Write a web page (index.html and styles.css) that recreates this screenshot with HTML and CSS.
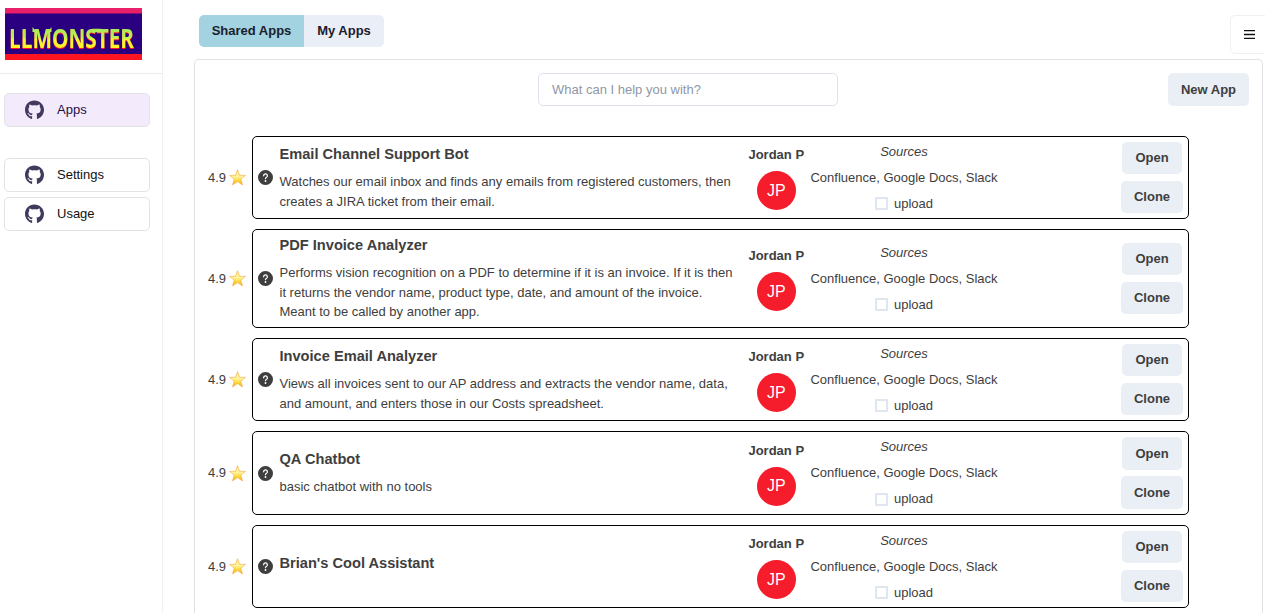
FILE: index.html
```
<!DOCTYPE html>
<html lang="en">
<head>
<meta charset="utf-8">
<title>LLMonster</title>
<link rel="stylesheet" href="styles.css">
</head>
<body>
<svg class="defs" width="0" height="0" aria-hidden="true">
  <defs>
    <linearGradient id="gold" x1="0" y1="0" x2="0" y2="1"><stop offset="0" stop-color="#ffe98a"/><stop offset=".45" stop-color="#fff3a0"/><stop offset=".65" stop-color="#ffe04a"/><stop offset="1" stop-color="#fba81c"/></linearGradient>
    <linearGradient id="slime" gradientUnits="userSpaceOnUse" x1="0" y1="18" x2="0" y2="41"><stop offset="0" stop-color="#a6e85c"/><stop offset=".5" stop-color="#bdf052"/><stop offset=".6" stop-color="#f4f636"/><stop offset="1" stop-color="#fff01e"/></linearGradient>
    <symbol id="github" viewBox="0 0 496 512"><path d="M165.9 397.4c0 2-2.3 3.6-5.2 3.6-3.3.3-5.6-1.3-5.6-3.6 0-2 2.3-3.6 5.2-3.6 3-.3 5.6 1.3 5.6 3.6zm-31.1-4.5c-.7 2 1.3 4.3 4.3 4.9 2.6 1 5.6 0 6.2-2s-1.3-4.3-4.3-5.2c-2.6-.7-5.5.3-6.2 2.3zm44.2-1.7c-2.9.7-4.9 2.6-4.6 4.9.3 2 2.9 3.3 5.9 2.6 2.9-.7 4.9-2.6 4.6-4.6-.3-1.9-3-3.2-5.9-2.9zM244.8 8C106.1 8 0 113.3 0 252c0 110.9 69.8 205.8 169.5 239.2 12.8 2.3 17.3-5.6 17.3-12.1 0-6.2-.3-40.4-.3-61.4 0 0-70 15-84.7-29.8 0 0-11.4-29.1-27.8-36.6 0 0-22.9-15.7 1.6-15.4 0 0 24.9 2 38.6 25.8 21.9 38.6 58.6 27.5 72.9 20.9 2.3-16 8.8-27.1 16-33.7-55.9-6.2-112.3-14.3-112.3-110.5 0-27.5 7.6-41.3 23.6-58.9-2.6-6.5-11.1-33.3 2.6-67.9 20.9-6.5 69 27 69 27 20-5.6 41.5-8.5 62.8-8.5s42.8 2.9 62.8 8.5c0 0 48.1-33.6 69-27 13.7 34.7 5.2 61.4 2.6 67.9 16 17.7 25.8 31.5 25.8 58.9 0 96.5-58.9 104.2-114.8 110.5 9.2 7.9 17 22.9 17 46.4 0 33.7-.3 75.4-.3 83.6 0 6.5 4.6 14.4 17.3 12.1C428.2 457.8 496 362.9 496 252 496 113.3 383.5 8 244.8 8z"/></symbol>
    <symbol id="star" viewBox="0 0 16 16"><path d="M8 .6 9.9 5.9 15.5 6 11.100 9.500 12.700 15 8 11.800 3.300 15 4.900 9.500.500 6 6.100 5.900z" fill="url(#gold)" stroke="#eea93a" stroke-width=".55" stroke-linejoin="round"/></symbol>
    <symbol id="help" viewBox="0 0 24 24"><path fill="currentColor" d="M12 0a12 12 0 1 0 12 12A12.013 12.013 0 0 0 12 0zm0 19a1.500 1.500 0 1 1 1.500-1.500A1.500 1.500 0 0 1 12 19zm1.600-6.080a1 1 0 0 0-.6.917 1 1 0 1 1-2 0 3 3 0 0 1 1.800-2.750A2 2 0 1 0 10 9.255a1 1 0 1 1-2 0 4 4 0 1 1 5.600 3.666z"/></symbol>
  </defs>
</svg>
<div class="app">
  <aside class="sidebar">
    <div class="brand">
      <svg class="logo" viewBox="0 0 137 52" role="img" aria-label="LLMonster">
        <rect width="137" height="52" fill="#2b0080"/>
        <rect width="137" height="5.500" fill="#ea1f6a"/>
        <rect y="46" width="137" height="6" fill="#ff1520"/>
        <text class="logo-text" x="4" y="39.500" textLength="125" lengthAdjust="spacingAndGlyphs">LLMONSTER</text>
        <path d="M27.500 24v-5l4 5zM46.500 24v-5l-4 5zM87 20.700h9v3.600h-9z" fill="url(#slime)"/>
      </svg>
    </div>
    <nav class="nav">
      <a class="nav-item active"><svg class="nav-icon"><use href="#github"/></svg>Apps</a>
      <a class="nav-item nav-split"><svg class="nav-icon"><use href="#github"/></svg>Settings</a>
      <a class="nav-item"><svg class="nav-icon"><use href="#github"/></svg>Usage</a>
    </nav>
  </aside>
  <main class="main">
    <header class="topbar">
      <div class="tabs"><button class="tab selected">Shared Apps</button><button class="tab">My Apps</button></div>
      <button class="menu" aria-label="Menu"><svg width="11" height="9" viewBox="0 0 11 9"><path d="M0 .5h11M0 4.500h11M0 8.500h11" stroke="#111" stroke-width="1.300"/></svg></button>
    </header>
    <section class="panel">
      <div class="toolbar">
        <input class="search" placeholder="What can I help you with?">
        <button class="btn btn-new">New App</button>
      </div>
      <div class="list">
        <div class="row">
          <div class="rating">4.9<svg class="star"><use href="#star"/></svg></div>
          <article class="card">
            <svg class="help"><use href="#help"/></svg>
            <div class="info"><h2 class="title">Email Channel Support Bot</h2><p class="desc">Watches our email inbox and finds any emails from registered customers, then<br>creates a JIRA ticket from their email.</p></div>
            <div class="author"><b>Jordan P</b><span class="avatar">JP</span></div>
            <div class="sources"><em>Sources</em><span>Confluence, Google Docs, Slack</span><label class="upload"><i class="box"></i>upload</label></div>
            <div class="actions"><button class="btn btn-open">Open</button><button class="btn btn-clone">Clone</button></div>
          </article>
        </div>
        <div class="row">
          <div class="rating">4.9<svg class="star"><use href="#star"/></svg></div>
          <article class="card">
            <svg class="help"><use href="#help"/></svg>
            <div class="info"><h2 class="title">PDF Invoice Analyzer</h2><p class="desc">Performs vision recognition on a PDF to determine if it is an invoice. If it is then<br>it returns the vendor name, product type, date, and amount of the invoice.<br>Meant to be called by another app.</p></div>
            <div class="author"><b>Jordan P</b><span class="avatar">JP</span></div>
            <div class="sources"><em>Sources</em><span>Confluence, Google Docs, Slack</span><label class="upload"><i class="box"></i>upload</label></div>
            <div class="actions"><button class="btn btn-open">Open</button><button class="btn btn-clone">Clone</button></div>
          </article>
        </div>
        <div class="row">
          <div class="rating">4.9<svg class="star"><use href="#star"/></svg></div>
          <article class="card">
            <svg class="help"><use href="#help"/></svg>
            <div class="info"><h2 class="title">Invoice Email Analyzer</h2><p class="desc">Views all invoices sent to our AP address and extracts the vendor name, data,<br>and amount, and enters those in our Costs spreadsheet.</p></div>
            <div class="author"><b>Jordan P</b><span class="avatar">JP</span></div>
            <div class="sources"><em>Sources</em><span>Confluence, Google Docs, Slack</span><label class="upload"><i class="box"></i>upload</label></div>
            <div class="actions"><button class="btn btn-open">Open</button><button class="btn btn-clone">Clone</button></div>
          </article>
        </div>
        <div class="row">
          <div class="rating">4.9<svg class="star"><use href="#star"/></svg></div>
          <article class="card">
            <svg class="help"><use href="#help"/></svg>
            <div class="info"><h2 class="title">QA Chatbot</h2><p class="desc">basic chatbot with no tools</p></div>
            <div class="author"><b>Jordan P</b><span class="avatar">JP</span></div>
            <div class="sources"><em>Sources</em><span>Confluence, Google Docs, Slack</span><label class="upload"><i class="box"></i>upload</label></div>
            <div class="actions"><button class="btn btn-open">Open</button><button class="btn btn-clone">Clone</button></div>
          </article>
        </div>
        <div class="row">
          <div class="rating">4.9<svg class="star"><use href="#star"/></svg></div>
          <article class="card">
            <svg class="help"><use href="#help"/></svg>
            <div class="info"><h2 class="title">Brian's Cool Assistant</h2><p class="desc"></p></div>
            <div class="author"><b>Jordan P</b><span class="avatar">JP</span></div>
            <div class="sources"><em>Sources</em><span>Confluence, Google Docs, Slack</span><label class="upload"><i class="box"></i>upload</label></div>
            <div class="actions"><button class="btn btn-open">Open</button><button class="btn btn-clone">Clone</button></div>
          </article>
        </div>
      </div>
    </section>
  </main>
</div>
</body>
</html>
```

FILE: styles.css
```
* { box-sizing: border-box; }
html, body { height: 100%; }
body { margin: 0; overflow: hidden; background: #fff; color: #3e3e3e; font: 13px/19.5px "Liberation Sans", Arial, sans-serif; }
button, input { font: inherit; color: inherit; margin: 0; border: 0; padding: 0; }
svg { display: block; flex: none; }
.defs { position: absolute; }
.app { display: flex; height: 613px; overflow: hidden; }
.sidebar { width: 163px; flex: none; border-right: 1px solid #f1f1f2; }
.brand { height: 74px; padding: 8px 0 0 5px; border-bottom: 1px solid #ececee; }
.logo { width: 137px; height: 52px; }
.logo-text { font-family: "Open Sans", sans-serif; font-weight: 700; font-size: 26px; fill: url(#slime); filter: drop-shadow(0 1.5px 0 #ff1530); }
.nav { padding: 19px 12px 0 4px; display: flex; flex-direction: column; gap: 5px; }
.nav-item { height: 34px; display: flex; align-items: center; gap: 13px; padding-left: 20px; border: 1px solid #e3e3e6; border-radius: 5px; color: #111; }
.nav-item.active { background: #f3eafc; color: #1d1147; }
.nav-split { margin-top: 26px; }
.nav-icon { width: 19px; height: 20px; fill: #413a5d; }
.main { flex: 1; min-width: 0; padding: 15px 0 0 31px; }
.topbar { height: 44px; display: flex; justify-content: space-between; align-items: flex-start; padding-left: 5px; }
.tabs { display: flex; border-radius: 5px; overflow: hidden; }
.tab { height: 32px; width: 80px; font-weight: 700; background: #eaeef6; color: #1a202c; }
.tab.selected { width: 105px; background: #a3d3e0; }
.menu { width: 39px; height: 39px; margin-right: -4px; border: 1px solid #f1f1f2; border-radius: 5px; background: #fff; display: flex; align-items: center; justify-content: center; }
.panel { width: 1069px; height: 560px; border: 1px solid #e2e2e4; border-bottom: 0; border-radius: 5px 5px 0 0; padding-top: 13px; }
.toolbar { display: flex; justify-content: space-between; padding: 0 13px 0 343px; }
.search { width: 300px; height: 33px; border: 1px solid #dfe3ee; border-radius: 5px; padding: 0 13px; outline: 0; }
.search::placeholder { color: #8f97a6; opacity: 1; }
.btn { height: 32.5px; border-radius: 5px; background: #eaeff6; font-weight: 700; }
.btn-new { width: 81px; height: 33px; }
.btn-open { width: 60px; }
.btn-clone { width: 62px; }
.list { margin-top: 29.75px; padding: 0 73px 0 13px; display: flex; flex-direction: column; gap: 10px; }
.row { display: flex; align-items: center; }
.rating { width: 44px; flex: none; display: flex; align-items: center; gap: 3px; }
.star { width: 17px; height: 17px; }
.card { flex: 1; display: grid; grid-template-columns: 15px 469.5px 67.5px 188px 1fr; align-items: center; border: 1px solid #000; border-radius: 5px; padding: 5px; }
.help { width: 15px; height: 15px; }
.info { padding-left: 6.5px; }
.title { margin: 0; font-size: 14.625px; line-height: 21px; }
.desc { margin: 7px 0 0; white-space: nowrap; }
.author, .sources { display: flex; flex-direction: column; align-items: center; gap: 6.5px; white-space: nowrap; }
.avatar { width: 39px; height: 39px; border-radius: 50%; background: #f51c2c; color: #fff; font-size: 16px; line-height: 19px; padding-bottom: 1px; display: flex; align-items: center; justify-content: center; }
.upload { display: flex; align-items: center; gap: 6px; }
.box { width: 13px; height: 13px; border: 2px solid #e0e6ef; border-radius: 1px; }
.actions { display: flex; flex-direction: column; align-items: center; justify-self: end; gap: 6.5px; }
```
